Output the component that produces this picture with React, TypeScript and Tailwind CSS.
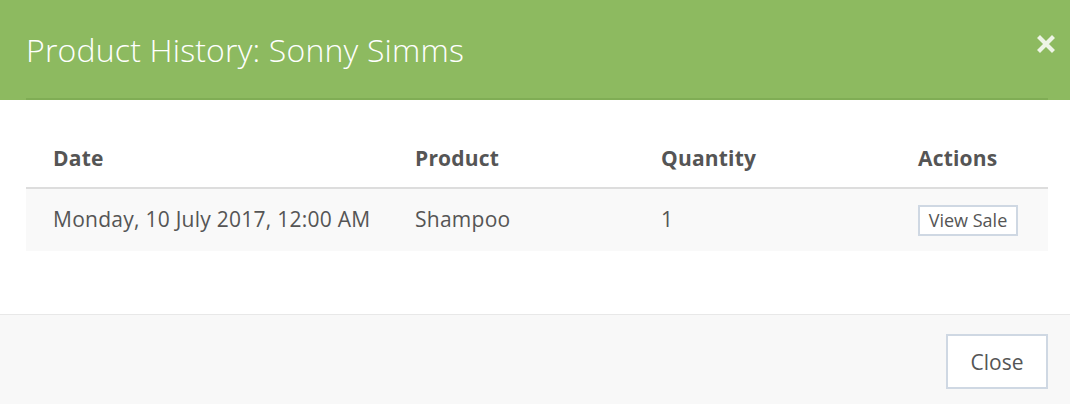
import React from "react";

export default function App() {
  return (
    <div className="w-[1070px] h-[404px] overflow-hidden bg-white text-[#555]" style={{ fontFamily: '"Open Sans", "Noto Sans", sans-serif' }}>
      <div className="h-[100px] bg-[#8dba60] flex flex-col">
        <div className="flex-1 flex items-center justify-between ml-[26px] mr-[22px] border-b-2 border-[#80ad55]">
          <h1 className="text-[32px] font-light text-white leading-none pt-[2px] tracking-[0.18px]">Product History: Sonny Simms</h1>
          <svg width="18" height="18" viewBox="0 0 18 18" className="mr-[-7px] mb-[10px]">
            <path d="M3 3 L15 15 M15 3 L3 15" stroke="#eef4e6" strokeWidth="4.2" strokeLinecap="square" />
          </svg>
        </div>
      </div>
      <div className="h-[214px] pl-[26px] pr-[22px] pt-[27px]">
        <table className="w-full border-collapse table-fixed">
          <colgroup>
            <col className="w-[362px]" />
            <col className="w-[246px]" />
            <col className="w-[257px]" />
            <col />
          </colgroup>
          <thead>
            <tr className="border-b-2 border-[#dddddd] h-[61px]">
              <th className="text-left font-bold text-[21px] pl-[27px] pt-[3px] text-[#555] tracking-[0.2px]">Date</th>
              <th className="text-left font-bold text-[21px] pl-[27px] pt-[3px] text-[#555] tracking-[0.2px]">Product</th>
              <th className="text-left font-bold text-[21px] pl-[27px] pt-[3px] text-[#555] tracking-[0.2px]">Quantity</th>
              <th className="text-left font-bold text-[21px] pl-[27px] pt-[3px] text-[#555] tracking-[0.2px]">Actions</th>
            </tr>
          </thead>
          <tbody>
            <tr className="bg-[#f9f9f9] h-[63px]">
              <td className="pl-[27px] text-[21px] pb-[1px] tracking-[0.26px]">Monday, 10 July 2017, 12:00 AM</td>
              <td className="pl-[27px] text-[21px] pb-[1px] tracking-[0.26px]">Shampoo</td>
              <td className="pl-[27px] text-[21px] pb-[1px]">1</td>
              <td className="pl-[27px]">
                <button className="h-[31px] w-[100px] border-2 border-[#cfd8e3] bg-white text-[18px] text-[#555] leading-none">View Sale</button>
              </td>
            </tr>
          </tbody>
        </table>
      </div>
      <div className="border-t border-[#e8e8e8] bg-[#f8f8f8] h-[90px] flex justify-end items-start pt-[19px] pr-[22px]">
        <button className="h-[55px] w-[102px] border-2 border-[#cfd8e3] bg-white text-[21px] text-[#555] leading-none pt-[2px]">Close</button>
      </div>
    </div>
  );
}
